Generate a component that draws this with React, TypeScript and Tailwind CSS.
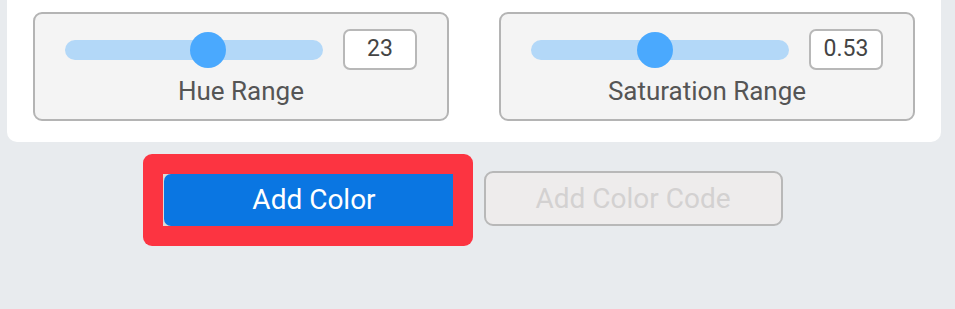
import React from "react";

const FONT = { fontFamily: "Roboto, 'Liberation Sans', sans-serif" };

type RangeProps = {
  label: string;
  value: string;
  pos: number; // thumb position along the track, 0..1
};

function RangePanel({ label, value, pos }: RangeProps) {
  return (
    <div className="flex flex-col items-stretch rounded-[9px] border-2 border-[#b4b4b4] bg-[#f4f4f4] px-[30px] pt-[15px] pb-[13px]">
      <div className="flex items-center gap-[20px]">
        <div className="relative h-[20px] flex-1 rounded-full bg-[#b3d8f8]">
          {/* thumb */}
          <div
            className="absolute top-1/2 h-[36px] w-[36px] -translate-x-1/2 -translate-y-1/2 rounded-full bg-[#4aa9fe]"
            style={{ left: `calc(18px + (100% - 36px) * ${pos})` }}
          />
        </div>
        <div className="flex h-[41px] w-[74px] items-center justify-center rounded-[7px] border-2 border-[#b8b8b8] bg-white text-[23px] text-[#444]">
          {value}
        </div>
      </div>
      <p className="mt-[6px] text-center text-[26px] leading-[30px] text-[#555]">{label}</p>
    </div>
  );
}

export default function App() {
  return (
    <div className="h-[309px] w-full overflow-hidden bg-[#e8ebee]" style={FONT}>
      {/* settings card (top is scrolled out of view) */}
      <div className="ml-[7px] w-[934px] rounded-b-[10px] bg-white px-[26px] pt-[12px] pb-[21px]">
        <div className="grid grid-cols-2 gap-[50px]">
          <RangePanel label="Hue Range" value="23" pos={0.565} />
          <RangePanel label="Saturation Range" value="0.53" pos={0.478} />
        </div>
      </div>

      {/* actions */}
      <div className="flex items-start justify-center gap-[31px] pt-[29px] pr-[10px]">
        <div className="-mx-[20px] mt-[-17px] rounded-[9px] bg-[#fc3441] p-[20px]">
          <div className="flex h-[52px] w-[290px] bg-[#dcdad6] pl-px">
            <button className="flex-1 rounded-l-[7px] bg-[#0a76e2] pl-[12px] text-[28px] text-white">
              Add Color
            </button>
          </div>
        </div>
        <button
          disabled
          className="h-[55px] w-[299px] rounded-[9px] border-2 border-[#b8b8b8] bg-[#eeecec] text-[28px] text-[#d3d1d1]"
        >
          Add Color Code
        </button>
      </div>
    </div>
  );
}
